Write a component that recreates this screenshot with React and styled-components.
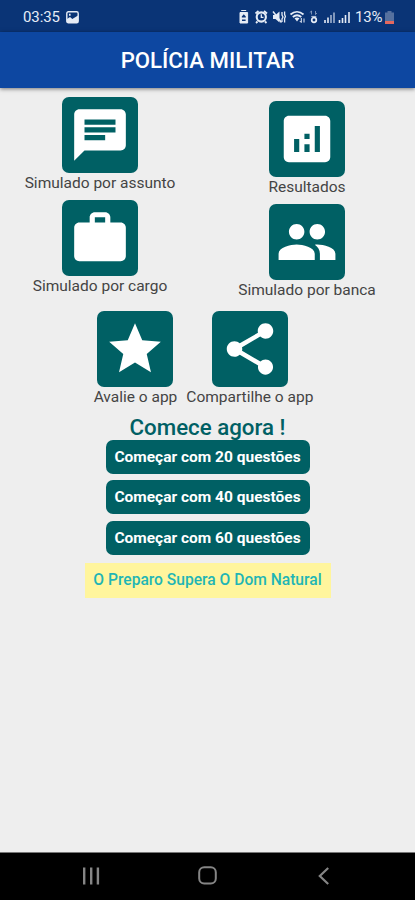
import React from 'react';
import styled, { createGlobalStyle } from 'styled-components';
import { MdAnalytics, MdChat, MdPeople, MdShare, MdStar, MdWork } from 'react-icons/md';

const GlobalStyle = createGlobalStyle`
    * {
        box-sizing: border-box;
    }

    body {
        margin: 0;
        background-color: #eeeeee;
        font-family: Roboto, "Liberation Sans", sans-serif;
    }
`;

const Screen = styled.div`
    display: flex;
    flex-direction: column;
    width: 100%;
    height: 900px;
    overflow: hidden;
    background-color: #eeeeee;
`;

const StatusBar = styled.div`
    display: flex;
    align-items: center;
    justify-content: space-between;
    flex: none;
    height: 32px;
    padding: 2px 21px 0 23px;
    background-color: #0a3476;
    color: #e6ecf6;
`;

const StatusGroup = styled.div`
    display: flex;
    align-items: center;
`;

const Clock = styled.span`
    width: 43px;
    font-size: 15px;
    line-height: 20px;
    letter-spacing: -0.1px;
    white-space: nowrap;
`;

const Battery = styled.span`
    width: 30px;
    font-size: 15px;
    line-height: 20px;
    letter-spacing: -0.2px;
    white-space: nowrap;
`;

const Header = styled.header`
    display: flex;
    align-items: center;
    justify-content: center;
    flex: none;
    height: 56px;
    background-color: #0d47a1;
    box-shadow: 0 1px 4px rgba(0, 0, 0, 0.5);
    z-index: 1;
`;

const Title = styled.h1`
    margin: 0;
    color: #ffffff;
    font-size: 22.2px;
    font-weight: 500;
    line-height: 28px;
    white-space: nowrap;
`;

const Content = styled.main`
    display: flex;
    flex-direction: column;
    flex: 1;
`;

const MenuGrid = styled.div`
    display: grid;
    grid-template-columns: 199px 215px;
    padding: 9px 0 0 0.5px;
`;

const MenuColumn = styled.div`
    display: flex;
    flex-direction: column;
    align-items: center;
    gap: 7px;
    padding-top: ${({ $offset }) => $offset || 0}px;
`;

const ShortcutRow = styled.div`
    display: flex;
    justify-content: center;
    gap: 9px;
    padding: 11px 8px 0 0;
`;

const MenuItem = styled.div`
    display: flex;
    flex-direction: column;
    align-items: center;
    cursor: pointer;
`;

const Tile = styled.div`
    display: flex;
    align-items: center;
    justify-content: center;
    width: 76px;
    height: 76px;
    border-radius: 7px;
    background-color: #006064;
    color: #ffffff;
`;

const Label = styled.span`
    padding-top: 1px;
    color: #444444;
    font-size: 15.5px;
    font-weight: 400;
    line-height: 19px;
    white-space: nowrap;
`;

const StartSection = styled.section`
    display: flex;
    flex-direction: column;
    align-items: center;
    padding-top: 7px;
`;

const StartTitle = styled.h2`
    margin: 0;
    color: #006064;
    font-size: 22.3px;
    font-weight: 500;
    line-height: 26px;
    white-space: nowrap;
`;

const ButtonList = styled.div`
    display: flex;
    flex-direction: column;
    gap: 6.3px;
`;

const StartButton = styled.button`
    width: 204px;
    height: 34px;
    padding: 0;
    border: none;
    border-radius: 7px;
    background-color: #006064;
    color: #ffffff;
    font-family: inherit;
    font-size: 15.5px;
    font-weight: 700;
    white-space: nowrap;
    cursor: pointer;
`;

const Quote = styled.p`
    width: 246px;
    margin: 8px 0 0;
    background-color: #fff59d;
    color: #1fb5b5;
    font-size: 15.6px;
    font-weight: 500;
    line-height: 35px;
    text-align: center;
    white-space: nowrap;
`;

const NavBar = styled.nav`
    display: flex;
    align-items: center;
    justify-content: space-between;
    flex: none;
    height: 48px;
    padding: 0 82px 2px;
    border-top: 1px solid #777777;
    background-color: #000000;
`;

const PhotoIcon = () => (
    <svg width="13" height="13" viewBox="0 0 13 13">
        <rect x="0.8" y="0.8" width="11.4" height="11" rx="1.6" fill="none" stroke="#e6ecf6" strokeWidth="1.4" />
        <path d="M1 11V8l3-2 2.3 2L12 4.500V12H1z" fill="#e6ecf6" />
        <path d="M3 2.800h1.600v2H3z" fill="#e6ecf6" />
    </svg>
);

const StatusIcons = () => (
    <svg width="116" height="16" viewBox="0 0 116 16" fill="none" stroke="#e6ecf6">
        {/* battery saver */}
        <path d="M2.200 1.500h5M1 3.500h7.600V14H1z" fill="#e6ecf6" strokeWidth="1" />
        <path d="M4.800 5.200l2 2.300v1H2.800v-1zM3 10.500h3.600v1.600H3z" fill="#0a3476" stroke="none" />
        {/* alarm */}
        <path d="M16.500 4.500l3-2.500M25 2l3 2.500M18.500 12.500L17 14M26 12.500l1.500 1.500" strokeWidth="1.800" />
        <circle cx="22.300" cy="8" r="4.600" strokeWidth="2.100" />
        <path d="M22.300 5.300v3h2.200" strokeWidth="1.300" />
        {/* vibrate */}
        <path d="M34 6h2.500l4-3.500v11L36.500 10H34z" fill="#e6ecf6" stroke="none" />
        <path d="M34 2.500l8.500 11" strokeWidth="1.500" />
        <path d="M43 3v3l1 2-1 2v3M45.600 2.500v3l.8 2-.8 2v4" strokeWidth="1.300" />
        {/* wifi */}
        <path d="M51.500 5.500c4-3.500 9-3.500 13 0M53.800 8c2.700-2.200 5.800-2.200 8.500 0" strokeWidth="1.800" />
        <path d="M55.500 9.300c1.600-1.200 3.400-1.200 5 0l-2.500 3.200z" fill="#e6ecf6" stroke="none" />
        <path d="M62.300 9v4.500M60.800 12l1.500 1.600M65 13.500V9.500" strokeWidth="1" />
        {/* data */}
        <path d="M72.500 2v3.500M70.800 3.500L72.500 2M76.500 2v3.500M78 4l-1.500 1.500" strokeWidth="1" opacity="0.500" />
        <circle cx="75" cy="11" r="2.300" strokeWidth="1.700" />
        <path d="M72.300 7.500h5" strokeWidth="1.200" opacity="0.700" />
        {/* signal */}
        <path d="M86 14v-3M89 14V8.500" strokeWidth="1.600" />
        <path d="M92 14V6M95 14V3.500" strokeWidth="1.800" opacity="0.600" />
        <path d="M100.500 14v-3M103.500 14V9M106.500 14V6M110 14V3" strokeWidth="1.600" />
    </svg>
);

const BatteryIcon = () => (
    <svg width="9" height="13" viewBox="0 0 9 13">
        <path d="M2.500 0h4v1.500H9V10H0V1.500h2.500z" fill="#56719f" />
        <path d="M0 10h9v3H0z" fill="#e4685f" />
    </svg>
);

const RecentsIcon = () => (
    <svg width="18" height="18" viewBox="0 0 18 18" stroke="#858585" strokeWidth="2.400">
        <path d="M2.200 0.500v17M9.200 0.500v17M15.900 0.500v17" />
    </svg>
);

const HomeIcon = () => (
    <svg width="19" height="19" viewBox="0 0 19 19">
        <rect x="1.200" y="1.200" width="16.600" height="16.400" rx="5" fill="none" stroke="#858585" strokeWidth="2" />
    </svg>
);

const BackIcon = () => (
    <svg width="18" height="18" viewBox="0 0 18 18" fill="none" stroke="#858585" strokeWidth="2.200">
        <path d="M13.200 1L4.800 9l8.400 8" />
    </svg>
);

const leftItems = [
    { label: 'Simulado por assunto', icon: MdChat },
    { label: 'Simulado por cargo', icon: MdWork },
];

const rightItems = [
    { label: 'Resultados', icon: MdAnalytics },
    { label: 'Simulado por banca', icon: MdPeople },
];

const shortcuts = [
    { label: 'Avalie o app', icon: MdStar },
    { label: 'Compartilhe o app', icon: MdShare },
];

const questionCounts = [20, 40, 60];

const MenuOption = ({ label, icon: Icon }) => (
    <MenuItem>
        <Tile>
            <Icon size={62} />
        </Tile>
        <Label>{label}</Label>
    </MenuItem>
);

const App = () => {
    return (
        <>
            <GlobalStyle />
            <Screen>
                <StatusBar>
                    <StatusGroup>
                        <Clock>03:35</Clock>
                        <PhotoIcon />
                    </StatusGroup>
                    <StatusGroup>
                        <StatusIcons />
                        <Battery>13%</Battery>
                        <BatteryIcon />
                    </StatusGroup>
                </StatusBar>
                <Header>
                    <Title>POLÍCIA MILITAR</Title>
                </Header>
                <Content>
                    <MenuGrid>
                        <MenuColumn>
                            {leftItems.map((item) => (
                                <MenuOption key={item.label} {...item} />
                            ))}
                        </MenuColumn>
                        <MenuColumn $offset={4}>
                            {rightItems.map((item) => (
                                <MenuOption key={item.label} {...item} />
                            ))}
                        </MenuColumn>
                    </MenuGrid>
                    <ShortcutRow>
                        {shortcuts.map((item) => (
                            <MenuOption key={item.label} {...item} />
                        ))}
                    </ShortcutRow>
                    <StartSection>
                        <StartTitle>Comece agora !</StartTitle>
                        <ButtonList>
                            {questionCounts.map((count) => (
                                <StartButton key={count}>Começar com {count} questões</StartButton>
                            ))}
                        </ButtonList>
                        <Quote>O Preparo Supera O Dom Natural</Quote>
                    </StartSection>
                </Content>
                <NavBar>
                    <RecentsIcon />
                    <HomeIcon />
                    <BackIcon />
                </NavBar>
            </Screen>
        </>
    );
};

export default App;
